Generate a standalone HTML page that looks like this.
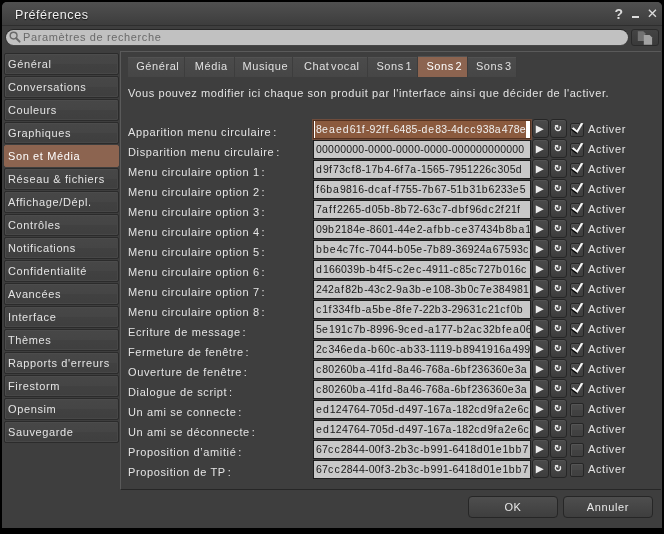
<!DOCTYPE html><html><head><meta charset="utf-8"><style>html,body{margin:0;padding:0;background:#000;width:664px;height:534px;overflow:hidden}
body{font-family:"Liberation Sans",sans-serif}
.root{position:absolute;left:0;top:0;width:664px;height:534px;will-change:transform;overflow:hidden}
.root div,.root svg{position:absolute}
.root svg{overflow:visible}
.win{left:2px;top:2px;width:660px;height:526px;background:#3e3e3e;border-radius:5px 5px 0 0}
.title{left:2px;top:2px;width:660px;height:23px;background:linear-gradient(#505050,#3d3d3d);border-radius:5px 5px 0 0}
.tsep{left:2px;top:25px;width:660px;height:1px;background:#2e2e2e}
.ttext{left:15px;top:7px;font-size:12.5px;letter-spacing:0.55px;color:#f0f0f0;text-shadow:0 1px 1px #111;line-height:16px;white-space:nowrap}
.help{left:614.5px;top:7px;font-size:14px;font-weight:bold;color:#dcdcdc;line-height:15px}
.mini{left:632px;top:16px;width:7px;height:2px;background:#dcdcdc}
.close{left:646.8px;top:9px}
.search{left:6px;top:30px;width:622px;height:15px;background:#c1c1c1;border-radius:8px;box-shadow:0 -1px 0 #262626,-1px 0 0 #303030,0 1px 0 #474747}
.mag{left:9px;top:31px}
.ph{left:23px;top:30px;font-size:11px;letter-spacing:0.62px;color:#6a6a6a;line-height:14px;white-space:nowrap}
.sbtn{left:631px;top:29px;width:28px;height:17px;border-radius:3px;background:linear-gradient(#444,#3a3a3a);border:1px solid #2a2a2a;box-sizing:border-box}
.sicon{left:637px;top:29px}
.stab{left:4px;width:115px;height:22px;box-sizing:border-box;border:1px solid #2b2b2b;border-radius:2px;background:linear-gradient(#474747 0%,#454545 50%,#414141 51%,#3f3f3f 100%);box-shadow:inset 1px 1px 0 #4c4c4c,inset -1px -1px 0 #474747}
.stab span{position:absolute;left:3px;top:3px;font-size:11px;letter-spacing:0.62px;color:#e4e4e4;line-height:15px;white-space:nowrap}
.stab.sel{background:#8c6450;border-color:#8c6450;box-shadow:none}
.stab.sel span{color:#fff}
.panel{left:120px;top:51px;width:540px;height:437px;border-top:1px solid #5a5a5a;border-left:1px solid #5a5a5a;border-bottom:1px solid #262626}
.tab{top:57px;height:20px;background:linear-gradient(#4b4b4b,#464646);box-shadow:inset -1px 0 0 #3d3d3d,inset 0 1px 0 #525252}
.tab span{position:absolute;left:2.6px;right:0;text-align:center;top:2px;font-size:11px;letter-spacing:0.58px;color:#e0e0e0;line-height:15px;white-space:nowrap}
.tab.sel{background:#8c6450;top:56px;height:21px}
.tab.sel span{top:3px;color:#fff}
.desc{left:128px;top:86px;font-size:11px;letter-spacing:0.585px;color:#e4e4e4;line-height:14px;white-space:nowrap}
.lab{left:128px;font-size:11px;letter-spacing:0.62px;color:#e4e4e4;line-height:14px;white-space:nowrap}
.fld{left:313px;width:218px;height:19px;box-sizing:border-box;border:1px solid #1e1e1e;background:#c8c8c8;overflow:hidden}
.fld span{position:absolute;left:2px;top:2px;font-size:10.5px;color:#181818;line-height:13px;white-space:nowrap}
.fld.foc{left:312px;width:220px;height:21px;background:#8b5a3e;border:1px solid #6e4c3c;box-shadow:inset 1px 1px 0 #52301f,inset -1px -1px 0 #52301f}
.fld.foc span{color:#f0f0f0;left:3px;top:3px}
.cur{position:absolute;left:1px;top:1px;width:1px;height:17px;background:#fff}
.selb{position:absolute;left:213px;top:1px;width:4px;height:17px;background:#fff}
.btn{width:17px;height:19px;box-sizing:border-box;border:1px solid #262626;border-radius:3px;background:linear-gradient(#4b4b4b,#3d3d3d);box-shadow:inset 0 1px 0 #535353}
.chk{left:570px;width:14px;height:14px;box-sizing:border-box;border:1px solid #262626;border-radius:2px;background:linear-gradient(#4a4a4a 0%,#474747 50%,#424242 51%,#404040 100%);box-shadow:inset 1px 1px 0 #545454}
.tick{filter:drop-shadow(-0.5px 1px 0.6px rgba(0,0,0,0.9))}
.act{left:588px;font-size:11px;letter-spacing:0.62px;color:#e4e4e4;line-height:14px}
.okb,.canb{top:496px;width:90px;height:22px;box-sizing:border-box;border:1px solid #262626;border-radius:4px;background:linear-gradient(#4e4e4e,#3e3e3e);text-align:center;font-size:11px;letter-spacing:0.62px;color:#e8e8e8;line-height:20px}
.okb{left:468px}
.canb{left:563px}
.sh{filter:drop-shadow(0 0.5px 0.5px rgba(0,0,0,0.9))}
.nsp{letter-spacing:-1.2px}
.tab span.tsp{position:static;letter-spacing:-1.5px}
.fld i{font-style:normal}
.fld i.l{letter-spacing:1.06px}
.fld i.g{letter-spacing:1.19px}
</style></head><body><div class="root">
<div class="win"></div>
<div class="title"></div><div class="tsep"></div>
<div class="ttext">Préférences</div>
<div class="help">?</div><div class="mini"></div>
<svg class="close" width="12" height="12" viewBox="0 0 12 12"><path d="M1.9 0.8L8.9 7.8M8.9 0.8L1.9 7.8" stroke="#d8d8d8" stroke-width="1.4"/></svg>
<div class="search"></div><svg class="mag" width="16" height="16" viewBox="0 0 16 16"><circle cx="4.6" cy="4.6" r="3.4" fill="none" stroke="#6a6a6a" stroke-width="1.4"/><path d="M7.2 7.2L10.6 10.6" stroke="#6a6a6a" stroke-width="2" stroke-linecap="round"/></svg><div class="ph">Paramètres de recherche</div>
<div class="sbtn"></div><svg class="sicon" width="18" height="16" viewBox="0 0 18 16"><path d="M0.8 2.2H6.3L8.3 4.2V11.9H0.8Z" fill="#727272"/><path d="M6.8 6H12.6L15.1 8.5V15.8H6.8Z" fill="#a2a2a2"/></svg>
<div class="stab" style="top:53px"><span>Général</span></div>
<div class="stab" style="top:76px"><span>Conversations</span></div>
<div class="stab" style="top:99px"><span>Couleurs</span></div>
<div class="stab" style="top:122px"><span>Graphiques</span></div>
<div class="stab sel" style="top:145px"><span>Son et Média</span></div>
<div class="stab" style="top:168px"><span>Réseau &amp; fichiers</span></div>
<div class="stab" style="top:191px"><span>Affichage/Dépl.</span></div>
<div class="stab" style="top:214px"><span>Contrôles</span></div>
<div class="stab" style="top:237px"><span>Notifications</span></div>
<div class="stab" style="top:260px"><span>Confidentialité</span></div>
<div class="stab" style="top:283px"><span>Avancées</span></div>
<div class="stab" style="top:306px"><span>Interface</span></div>
<div class="stab" style="top:329px"><span>Thèmes</span></div>
<div class="stab" style="top:352px"><span>Rapports d'erreurs</span></div>
<div class="stab" style="top:375px"><span>Firestorm</span></div>
<div class="stab" style="top:398px"><span>Opensim</span></div>
<div class="stab" style="top:421px"><span>Sauvegarde</span></div>
<div class="panel"></div>
<div class="tab" style="left:128px;width:57px"><span>Général</span></div>
<div class="tab" style="left:185px;width:50px"><span>Média</span></div>
<div class="tab" style="left:235px;width:58px"><span>Musique</span></div>
<div class="tab" style="left:293px;width:75px"><span>Chat<span class="tsp"> </span>vocal</span></div>
<div class="tab" style="left:368px;width:50px"><span>Sons<span class="tsp"> </span>1</span></div>
<div class="tab sel" style="left:418px;width:50px"><span>Sons<span class="tsp"> </span>2</span></div>
<div class="tab" style="left:468px;width:49px"><span>Sons<span class="tsp"> </span>3</span></div>
<div class="desc">Vous pouvez modifier ici chaque son produit par l'interface ainsi que décider de l'activer.</div>
<div class="lab" style="top:125px">Apparition menu circulaire<span class="nsp"> </span>:</div>
<div class="fld foc" style="top:119px"><span style="letter-spacing:0.21px">8<i class="l">e</i><i class="l">a</i><i class="l">e</i><i class="l">d</i>61<i class="g">f</i>-92<i class="g">f</i><i class="g">f</i>-6485-<i class="l">d</i><i class="l">e</i>83-4<i class="l">d</i><i class="l">c</i><i class="l">c</i>938<i class="l">a</i>478<i class="l">e</i></span><i class="cur"></i><i class="selb"></i></div>
<div class="btn" style="left:532px;top:119px"></div><svg class="ico sh" style="left:533px;top:120px" width="16" height="18" viewBox="0 0 16 18"><path d="M2.7 5.2L10.9 9.3L2.7 13.4Z" fill="#ececec"/></svg>
<div class="btn" style="left:550px;top:119px"></div><svg class="ico sh" style="left:551px;top:120px" width="16" height="18" viewBox="0 0 16 18"><path d="M6.9 5.4A2.6 2.6 0 1 0 8.9 6.3" fill="none" stroke="#e8e8e8" stroke-width="1.5"/><path d="M3.5 4.9L7.3 4.9L7.3 8.5Z" fill="#e8e8e8"/></svg>
<div class="chk" style="top:123px"></div>
<svg class="ico tick" style="left:570px;top:123px" width="16" height="14" viewBox="0 0 16 14"><path d="M1.8 5.7L3.4 4.3L6.8 7.2L10.9 0.0L13.4 0.3L7.5 10.1Z" fill="#f8f8f8"/></svg>
<div class="act" style="top:122px">Activer</div>
<div class="lab" style="top:145px">Disparition menu circulaire<span class="nsp"> </span>:</div>
<div class="fld" style="top:140px"><span style="letter-spacing:0.21px">00000000-0000-0000-0000-000000000000</span></div>
<div class="btn" style="left:532px;top:139px"></div><svg class="ico sh" style="left:533px;top:140px" width="16" height="18" viewBox="0 0 16 18"><path d="M2.7 5.2L10.9 9.3L2.7 13.4Z" fill="#ececec"/></svg>
<div class="btn" style="left:550px;top:139px"></div><svg class="ico sh" style="left:551px;top:140px" width="16" height="18" viewBox="0 0 16 18"><path d="M6.9 5.4A2.6 2.6 0 1 0 8.9 6.3" fill="none" stroke="#e8e8e8" stroke-width="1.5"/><path d="M3.5 4.9L7.3 4.9L7.3 8.5Z" fill="#e8e8e8"/></svg>
<div class="chk" style="top:143px"></div>
<svg class="ico tick" style="left:570px;top:143px" width="16" height="14" viewBox="0 0 16 14"><path d="M1.8 5.7L3.4 4.3L6.8 7.2L10.9 0.0L13.4 0.3L7.5 10.1Z" fill="#f8f8f8"/></svg>
<div class="act" style="top:142px">Activer</div>
<div class="lab" style="top:165px">Menu circulaire option 1<span class="nsp"> </span>:</div>
<div class="fld" style="top:160px"><span style="letter-spacing:0.21px"><i class="l">d</i>9<i class="g">f</i>73<i class="l">c</i><i class="g">f</i>8-17<i class="l">b</i>4-6<i class="g">f</i>7<i class="l">a</i>-1565-7951226<i class="l">c</i>305<i class="l">d</i></span></div>
<div class="btn" style="left:532px;top:159px"></div><svg class="ico sh" style="left:533px;top:160px" width="16" height="18" viewBox="0 0 16 18"><path d="M2.7 5.2L10.9 9.3L2.7 13.4Z" fill="#ececec"/></svg>
<div class="btn" style="left:550px;top:159px"></div><svg class="ico sh" style="left:551px;top:160px" width="16" height="18" viewBox="0 0 16 18"><path d="M6.9 5.4A2.6 2.6 0 1 0 8.9 6.3" fill="none" stroke="#e8e8e8" stroke-width="1.5"/><path d="M3.5 4.9L7.3 4.9L7.3 8.5Z" fill="#e8e8e8"/></svg>
<div class="chk" style="top:163px"></div>
<svg class="ico tick" style="left:570px;top:163px" width="16" height="14" viewBox="0 0 16 14"><path d="M1.8 5.7L3.4 4.3L6.8 7.2L10.9 0.0L13.4 0.3L7.5 10.1Z" fill="#f8f8f8"/></svg>
<div class="act" style="top:162px">Activer</div>
<div class="lab" style="top:185px">Menu circulaire option 2<span class="nsp"> </span>:</div>
<div class="fld" style="top:180px"><span style="letter-spacing:0.21px"><i class="g">f</i>6<i class="l">b</i><i class="l">a</i>9816-<i class="l">d</i><i class="l">c</i><i class="l">a</i><i class="g">f</i>-<i class="g">f</i>755-7<i class="l">b</i>67-51<i class="l">b</i>31<i class="l">b</i>6233<i class="l">e</i>5</span></div>
<div class="btn" style="left:532px;top:179px"></div><svg class="ico sh" style="left:533px;top:180px" width="16" height="18" viewBox="0 0 16 18"><path d="M2.7 5.2L10.9 9.3L2.7 13.4Z" fill="#ececec"/></svg>
<div class="btn" style="left:550px;top:179px"></div><svg class="ico sh" style="left:551px;top:180px" width="16" height="18" viewBox="0 0 16 18"><path d="M6.9 5.4A2.6 2.6 0 1 0 8.9 6.3" fill="none" stroke="#e8e8e8" stroke-width="1.5"/><path d="M3.5 4.9L7.3 4.9L7.3 8.5Z" fill="#e8e8e8"/></svg>
<div class="chk" style="top:183px"></div>
<svg class="ico tick" style="left:570px;top:183px" width="16" height="14" viewBox="0 0 16 14"><path d="M1.8 5.7L3.4 4.3L6.8 7.2L10.9 0.0L13.4 0.3L7.5 10.1Z" fill="#f8f8f8"/></svg>
<div class="act" style="top:182px">Activer</div>
<div class="lab" style="top:205px">Menu circulaire option 3<span class="nsp"> </span>:</div>
<div class="fld" style="top:200px"><span style="letter-spacing:0.21px">7<i class="l">a</i><i class="g">f</i><i class="g">f</i>2265-<i class="l">d</i>05<i class="l">b</i>-8<i class="l">b</i>72-63<i class="l">c</i>7-<i class="l">d</i><i class="l">b</i><i class="g">f</i>96<i class="l">d</i><i class="l">c</i>2<i class="g">f</i>21<i class="g">f</i></span></div>
<div class="btn" style="left:532px;top:199px"></div><svg class="ico sh" style="left:533px;top:200px" width="16" height="18" viewBox="0 0 16 18"><path d="M2.7 5.2L10.9 9.3L2.7 13.4Z" fill="#ececec"/></svg>
<div class="btn" style="left:550px;top:199px"></div><svg class="ico sh" style="left:551px;top:200px" width="16" height="18" viewBox="0 0 16 18"><path d="M6.9 5.4A2.6 2.6 0 1 0 8.9 6.3" fill="none" stroke="#e8e8e8" stroke-width="1.5"/><path d="M3.5 4.9L7.3 4.9L7.3 8.5Z" fill="#e8e8e8"/></svg>
<div class="chk" style="top:203px"></div>
<svg class="ico tick" style="left:570px;top:203px" width="16" height="14" viewBox="0 0 16 14"><path d="M1.8 5.7L3.4 4.3L6.8 7.2L10.9 0.0L13.4 0.3L7.5 10.1Z" fill="#f8f8f8"/></svg>
<div class="act" style="top:202px">Activer</div>
<div class="lab" style="top:225px">Menu circulaire option 4<span class="nsp"> </span>:</div>
<div class="fld" style="top:220px"><span style="letter-spacing:0.21px">09<i class="l">b</i>2184<i class="l">e</i>-8601-44<i class="l">e</i>2-<i class="l">a</i><i class="g">f</i><i class="l">b</i><i class="l">b</i>-<i class="l">c</i><i class="l">e</i>37434<i class="l">b</i>8<i class="l">b</i><i class="l">a</i>1</span></div>
<div class="btn" style="left:532px;top:219px"></div><svg class="ico sh" style="left:533px;top:220px" width="16" height="18" viewBox="0 0 16 18"><path d="M2.7 5.2L10.9 9.3L2.7 13.4Z" fill="#ececec"/></svg>
<div class="btn" style="left:550px;top:219px"></div><svg class="ico sh" style="left:551px;top:220px" width="16" height="18" viewBox="0 0 16 18"><path d="M6.9 5.4A2.6 2.6 0 1 0 8.9 6.3" fill="none" stroke="#e8e8e8" stroke-width="1.5"/><path d="M3.5 4.9L7.3 4.9L7.3 8.5Z" fill="#e8e8e8"/></svg>
<div class="chk" style="top:223px"></div>
<svg class="ico tick" style="left:570px;top:223px" width="16" height="14" viewBox="0 0 16 14"><path d="M1.8 5.7L3.4 4.3L6.8 7.2L10.9 0.0L13.4 0.3L7.5 10.1Z" fill="#f8f8f8"/></svg>
<div class="act" style="top:222px">Activer</div>
<div class="lab" style="top:245px">Menu circulaire option 5<span class="nsp"> </span>:</div>
<div class="fld" style="top:240px"><span style="letter-spacing:0.21px"><i class="l">b</i><i class="l">b</i><i class="l">e</i>4<i class="l">c</i>7<i class="g">f</i><i class="l">c</i>-7044-<i class="l">b</i>05<i class="l">e</i>-7<i class="l">b</i>89-36924<i class="l">a</i>67593<i class="l">c</i></span></div>
<div class="btn" style="left:532px;top:239px"></div><svg class="ico sh" style="left:533px;top:240px" width="16" height="18" viewBox="0 0 16 18"><path d="M2.7 5.2L10.9 9.3L2.7 13.4Z" fill="#ececec"/></svg>
<div class="btn" style="left:550px;top:239px"></div><svg class="ico sh" style="left:551px;top:240px" width="16" height="18" viewBox="0 0 16 18"><path d="M6.9 5.4A2.6 2.6 0 1 0 8.9 6.3" fill="none" stroke="#e8e8e8" stroke-width="1.5"/><path d="M3.5 4.9L7.3 4.9L7.3 8.5Z" fill="#e8e8e8"/></svg>
<div class="chk" style="top:243px"></div>
<svg class="ico tick" style="left:570px;top:243px" width="16" height="14" viewBox="0 0 16 14"><path d="M1.8 5.7L3.4 4.3L6.8 7.2L10.9 0.0L13.4 0.3L7.5 10.1Z" fill="#f8f8f8"/></svg>
<div class="act" style="top:242px">Activer</div>
<div class="lab" style="top:265px">Menu circulaire option 6<span class="nsp"> </span>:</div>
<div class="fld" style="top:260px"><span style="letter-spacing:0.21px"><i class="l">d</i>166039<i class="l">b</i>-<i class="l">b</i>4<i class="g">f</i>5-<i class="l">c</i>2<i class="l">e</i><i class="l">c</i>-4911-<i class="l">c</i>85<i class="l">c</i>727<i class="l">b</i>016<i class="l">c</i></span></div>
<div class="btn" style="left:532px;top:259px"></div><svg class="ico sh" style="left:533px;top:260px" width="16" height="18" viewBox="0 0 16 18"><path d="M2.7 5.2L10.9 9.3L2.7 13.4Z" fill="#ececec"/></svg>
<div class="btn" style="left:550px;top:259px"></div><svg class="ico sh" style="left:551px;top:260px" width="16" height="18" viewBox="0 0 16 18"><path d="M6.9 5.4A2.6 2.6 0 1 0 8.9 6.3" fill="none" stroke="#e8e8e8" stroke-width="1.5"/><path d="M3.5 4.9L7.3 4.9L7.3 8.5Z" fill="#e8e8e8"/></svg>
<div class="chk" style="top:263px"></div>
<svg class="ico tick" style="left:570px;top:263px" width="16" height="14" viewBox="0 0 16 14"><path d="M1.8 5.7L3.4 4.3L6.8 7.2L10.9 0.0L13.4 0.3L7.5 10.1Z" fill="#f8f8f8"/></svg>
<div class="act" style="top:262px">Activer</div>
<div class="lab" style="top:285px">Menu circulaire option 7<span class="nsp"> </span>:</div>
<div class="fld" style="top:280px"><span style="letter-spacing:0.21px">242<i class="l">a</i><i class="g">f</i>82<i class="l">b</i>-43<i class="l">c</i>2-9<i class="l">a</i>3<i class="l">b</i>-<i class="l">e</i>108-3<i class="l">b</i>0<i class="l">c</i>7<i class="l">e</i>384981</span></div>
<div class="btn" style="left:532px;top:279px"></div><svg class="ico sh" style="left:533px;top:280px" width="16" height="18" viewBox="0 0 16 18"><path d="M2.7 5.2L10.9 9.3L2.7 13.4Z" fill="#ececec"/></svg>
<div class="btn" style="left:550px;top:279px"></div><svg class="ico sh" style="left:551px;top:280px" width="16" height="18" viewBox="0 0 16 18"><path d="M6.9 5.4A2.6 2.6 0 1 0 8.9 6.3" fill="none" stroke="#e8e8e8" stroke-width="1.5"/><path d="M3.5 4.9L7.3 4.9L7.3 8.5Z" fill="#e8e8e8"/></svg>
<div class="chk" style="top:283px"></div>
<svg class="ico tick" style="left:570px;top:283px" width="16" height="14" viewBox="0 0 16 14"><path d="M1.8 5.7L3.4 4.3L6.8 7.2L10.9 0.0L13.4 0.3L7.5 10.1Z" fill="#f8f8f8"/></svg>
<div class="act" style="top:282px">Activer</div>
<div class="lab" style="top:305px">Menu circulaire option 8<span class="nsp"> </span>:</div>
<div class="fld" style="top:300px"><span style="letter-spacing:0.21px"><i class="l">c</i>1<i class="g">f</i>334<i class="g">f</i><i class="l">b</i>-<i class="l">a</i>5<i class="l">b</i><i class="l">e</i>-8<i class="g">f</i><i class="l">e</i>7-22<i class="l">b</i>3-29631<i class="l">c</i>21<i class="l">c</i><i class="g">f</i>0<i class="l">b</i></span></div>
<div class="btn" style="left:532px;top:299px"></div><svg class="ico sh" style="left:533px;top:300px" width="16" height="18" viewBox="0 0 16 18"><path d="M2.7 5.2L10.9 9.3L2.7 13.4Z" fill="#ececec"/></svg>
<div class="btn" style="left:550px;top:299px"></div><svg class="ico sh" style="left:551px;top:300px" width="16" height="18" viewBox="0 0 16 18"><path d="M6.9 5.4A2.6 2.6 0 1 0 8.9 6.3" fill="none" stroke="#e8e8e8" stroke-width="1.5"/><path d="M3.5 4.9L7.3 4.9L7.3 8.5Z" fill="#e8e8e8"/></svg>
<div class="chk" style="top:303px"></div>
<svg class="ico tick" style="left:570px;top:303px" width="16" height="14" viewBox="0 0 16 14"><path d="M1.8 5.7L3.4 4.3L6.8 7.2L10.9 0.0L13.4 0.3L7.5 10.1Z" fill="#f8f8f8"/></svg>
<div class="act" style="top:302px">Activer</div>
<div class="lab" style="top:325px">Ecriture de message<span class="nsp"> </span>:</div>
<div class="fld" style="top:320px"><span style="letter-spacing:0.21px">5<i class="l">e</i>191<i class="l">c</i>7<i class="l">b</i>-8996-9<i class="l">c</i><i class="l">e</i><i class="l">d</i>-<i class="l">a</i>177-<i class="l">b</i>2<i class="l">a</i><i class="l">c</i>32<i class="l">b</i><i class="g">f</i><i class="l">e</i><i class="l">a</i>06</span></div>
<div class="btn" style="left:532px;top:319px"></div><svg class="ico sh" style="left:533px;top:320px" width="16" height="18" viewBox="0 0 16 18"><path d="M2.7 5.2L10.9 9.3L2.7 13.4Z" fill="#ececec"/></svg>
<div class="btn" style="left:550px;top:319px"></div><svg class="ico sh" style="left:551px;top:320px" width="16" height="18" viewBox="0 0 16 18"><path d="M6.9 5.4A2.6 2.6 0 1 0 8.9 6.3" fill="none" stroke="#e8e8e8" stroke-width="1.5"/><path d="M3.5 4.9L7.3 4.9L7.3 8.5Z" fill="#e8e8e8"/></svg>
<div class="chk" style="top:323px"></div>
<svg class="ico tick" style="left:570px;top:323px" width="16" height="14" viewBox="0 0 16 14"><path d="M1.8 5.7L3.4 4.3L6.8 7.2L10.9 0.0L13.4 0.3L7.5 10.1Z" fill="#f8f8f8"/></svg>
<div class="act" style="top:322px">Activer</div>
<div class="lab" style="top:345px">Fermeture de fenêtre<span class="nsp"> </span>:</div>
<div class="fld" style="top:340px"><span style="letter-spacing:0.21px">2<i class="l">c</i>346<i class="l">e</i><i class="l">d</i><i class="l">a</i>-<i class="l">b</i>60<i class="l">c</i>-<i class="l">a</i><i class="l">b</i>33-1119-<i class="l">b</i>8941916<i class="l">a</i>499</span></div>
<div class="btn" style="left:532px;top:339px"></div><svg class="ico sh" style="left:533px;top:340px" width="16" height="18" viewBox="0 0 16 18"><path d="M2.7 5.2L10.9 9.3L2.7 13.4Z" fill="#ececec"/></svg>
<div class="btn" style="left:550px;top:339px"></div><svg class="ico sh" style="left:551px;top:340px" width="16" height="18" viewBox="0 0 16 18"><path d="M6.9 5.4A2.6 2.6 0 1 0 8.9 6.3" fill="none" stroke="#e8e8e8" stroke-width="1.5"/><path d="M3.5 4.9L7.3 4.9L7.3 8.5Z" fill="#e8e8e8"/></svg>
<div class="chk" style="top:343px"></div>
<svg class="ico tick" style="left:570px;top:343px" width="16" height="14" viewBox="0 0 16 14"><path d="M1.8 5.7L3.4 4.3L6.8 7.2L10.9 0.0L13.4 0.3L7.5 10.1Z" fill="#f8f8f8"/></svg>
<div class="act" style="top:342px">Activer</div>
<div class="lab" style="top:365px">Ouverture de fenêtre<span class="nsp"> </span>:</div>
<div class="fld" style="top:360px"><span style="letter-spacing:0.21px"><i class="l">c</i>80260<i class="l">b</i><i class="l">a</i>-41<i class="g">f</i><i class="l">d</i>-8<i class="l">a</i>46-768<i class="l">a</i>-6<i class="l">b</i><i class="g">f</i>236360<i class="l">e</i>3<i class="l">a</i></span></div>
<div class="btn" style="left:532px;top:359px"></div><svg class="ico sh" style="left:533px;top:360px" width="16" height="18" viewBox="0 0 16 18"><path d="M2.7 5.2L10.9 9.3L2.7 13.4Z" fill="#ececec"/></svg>
<div class="btn" style="left:550px;top:359px"></div><svg class="ico sh" style="left:551px;top:360px" width="16" height="18" viewBox="0 0 16 18"><path d="M6.9 5.4A2.6 2.6 0 1 0 8.9 6.3" fill="none" stroke="#e8e8e8" stroke-width="1.5"/><path d="M3.5 4.9L7.3 4.9L7.3 8.5Z" fill="#e8e8e8"/></svg>
<div class="chk" style="top:363px"></div>
<svg class="ico tick" style="left:570px;top:363px" width="16" height="14" viewBox="0 0 16 14"><path d="M1.8 5.7L3.4 4.3L6.8 7.2L10.9 0.0L13.4 0.3L7.5 10.1Z" fill="#f8f8f8"/></svg>
<div class="act" style="top:362px">Activer</div>
<div class="lab" style="top:385px">Dialogue de script<span class="nsp"> </span>:</div>
<div class="fld" style="top:380px"><span style="letter-spacing:0.21px"><i class="l">c</i>80260<i class="l">b</i><i class="l">a</i>-41<i class="g">f</i><i class="l">d</i>-8<i class="l">a</i>46-768<i class="l">a</i>-6<i class="l">b</i><i class="g">f</i>236360<i class="l">e</i>3<i class="l">a</i></span></div>
<div class="btn" style="left:532px;top:379px"></div><svg class="ico sh" style="left:533px;top:380px" width="16" height="18" viewBox="0 0 16 18"><path d="M2.7 5.2L10.9 9.3L2.7 13.4Z" fill="#ececec"/></svg>
<div class="btn" style="left:550px;top:379px"></div><svg class="ico sh" style="left:551px;top:380px" width="16" height="18" viewBox="0 0 16 18"><path d="M6.9 5.4A2.6 2.6 0 1 0 8.9 6.3" fill="none" stroke="#e8e8e8" stroke-width="1.5"/><path d="M3.5 4.9L7.3 4.9L7.3 8.5Z" fill="#e8e8e8"/></svg>
<div class="chk" style="top:383px"></div>
<svg class="ico tick" style="left:570px;top:383px" width="16" height="14" viewBox="0 0 16 14"><path d="M1.8 5.7L3.4 4.3L6.8 7.2L10.9 0.0L13.4 0.3L7.5 10.1Z" fill="#f8f8f8"/></svg>
<div class="act" style="top:382px">Activer</div>
<div class="lab" style="top:405px">Un ami se connecte<span class="nsp"> </span>:</div>
<div class="fld" style="top:400px"><span style="letter-spacing:0.21px"><i class="l">e</i><i class="l">d</i>124764-705<i class="l">d</i>-<i class="l">d</i>497-167<i class="l">a</i>-182<i class="l">c</i><i class="l">d</i>9<i class="g">f</i><i class="l">a</i>2<i class="l">e</i>6<i class="l">c</i></span></div>
<div class="btn" style="left:532px;top:399px"></div><svg class="ico sh" style="left:533px;top:400px" width="16" height="18" viewBox="0 0 16 18"><path d="M2.7 5.2L10.9 9.3L2.7 13.4Z" fill="#ececec"/></svg>
<div class="btn" style="left:550px;top:399px"></div><svg class="ico sh" style="left:551px;top:400px" width="16" height="18" viewBox="0 0 16 18"><path d="M6.9 5.4A2.6 2.6 0 1 0 8.9 6.3" fill="none" stroke="#e8e8e8" stroke-width="1.5"/><path d="M3.5 4.9L7.3 4.9L7.3 8.5Z" fill="#e8e8e8"/></svg>
<div class="chk" style="top:403px"></div>
<div class="act" style="top:402px">Activer</div>
<div class="lab" style="top:425px">Un ami se déconnecte<span class="nsp"> </span>:</div>
<div class="fld" style="top:420px"><span style="letter-spacing:0.21px"><i class="l">e</i><i class="l">d</i>124764-705<i class="l">d</i>-<i class="l">d</i>497-167<i class="l">a</i>-182<i class="l">c</i><i class="l">d</i>9<i class="g">f</i><i class="l">a</i>2<i class="l">e</i>6<i class="l">c</i></span></div>
<div class="btn" style="left:532px;top:419px"></div><svg class="ico sh" style="left:533px;top:420px" width="16" height="18" viewBox="0 0 16 18"><path d="M2.7 5.2L10.9 9.3L2.7 13.4Z" fill="#ececec"/></svg>
<div class="btn" style="left:550px;top:419px"></div><svg class="ico sh" style="left:551px;top:420px" width="16" height="18" viewBox="0 0 16 18"><path d="M6.9 5.4A2.6 2.6 0 1 0 8.9 6.3" fill="none" stroke="#e8e8e8" stroke-width="1.5"/><path d="M3.5 4.9L7.3 4.9L7.3 8.5Z" fill="#e8e8e8"/></svg>
<div class="chk" style="top:423px"></div>
<div class="act" style="top:422px">Activer</div>
<div class="lab" style="top:445px">Proposition d’amitié<span class="nsp"> </span>:</div>
<div class="fld" style="top:440px"><span style="letter-spacing:0.21px">67<i class="l">c</i><i class="l">c</i>2844-00<i class="g">f</i>3-2<i class="l">b</i>3<i class="l">c</i>-<i class="l">b</i>991-6418<i class="l">d</i>01<i class="l">e</i>1<i class="l">b</i><i class="l">b</i>7</span></div>
<div class="btn" style="left:532px;top:439px"></div><svg class="ico sh" style="left:533px;top:440px" width="16" height="18" viewBox="0 0 16 18"><path d="M2.7 5.2L10.9 9.3L2.7 13.4Z" fill="#ececec"/></svg>
<div class="btn" style="left:550px;top:439px"></div><svg class="ico sh" style="left:551px;top:440px" width="16" height="18" viewBox="0 0 16 18"><path d="M6.9 5.4A2.6 2.6 0 1 0 8.9 6.3" fill="none" stroke="#e8e8e8" stroke-width="1.5"/><path d="M3.5 4.9L7.3 4.9L7.3 8.5Z" fill="#e8e8e8"/></svg>
<div class="chk" style="top:443px"></div>
<div class="act" style="top:442px">Activer</div>
<div class="lab" style="top:465px">Proposition de TP<span class="nsp"> </span>:</div>
<div class="fld" style="top:460px"><span style="letter-spacing:0.21px">67<i class="l">c</i><i class="l">c</i>2844-00<i class="g">f</i>3-2<i class="l">b</i>3<i class="l">c</i>-<i class="l">b</i>991-6418<i class="l">d</i>01<i class="l">e</i>1<i class="l">b</i><i class="l">b</i>7</span></div>
<div class="btn" style="left:532px;top:459px"></div><svg class="ico sh" style="left:533px;top:460px" width="16" height="18" viewBox="0 0 16 18"><path d="M2.7 5.2L10.9 9.3L2.7 13.4Z" fill="#ececec"/></svg>
<div class="btn" style="left:550px;top:459px"></div><svg class="ico sh" style="left:551px;top:460px" width="16" height="18" viewBox="0 0 16 18"><path d="M6.9 5.4A2.6 2.6 0 1 0 8.9 6.3" fill="none" stroke="#e8e8e8" stroke-width="1.5"/><path d="M3.5 4.9L7.3 4.9L7.3 8.5Z" fill="#e8e8e8"/></svg>
<div class="chk" style="top:463px"></div>
<div class="act" style="top:462px">Activer</div>
<div class="okb">OK</div><div class="canb">Annuler</div>
</div></body></html>
